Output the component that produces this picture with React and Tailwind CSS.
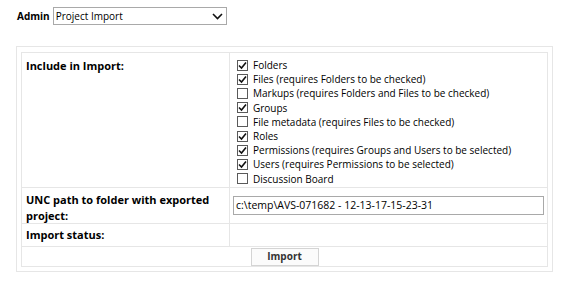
const OPTIONS = [
  { label: 'Folders', checked: true },
  { label: 'Files (requires Folders to be checked)', checked: true },
  { label: 'Markups (requires Folders and Files to be checked)', checked: false },
  { label: 'Groups', checked: true },
  { label: 'File metadata (requires Files to be checked)', checked: false },
  { label: 'Roles', checked: true },
  { label: 'Permissions (requires Groups and Users to be selected)', checked: true },
  { label: 'Users (requires Permissions to be selected)', checked: true },
  { label: 'Discussion Board', checked: false },
];

function Box({ checked }) {
  return (
    <span className="w-[11px] h-[11px] border border-[#5a5a5a] bg-white flex items-center justify-center shrink-0">
      {checked && (
        <svg width="9" height="9" viewBox="0 0 9 9">
          <path d="M1 4.5 L3.5 7 L8 1.5" fill="none" stroke="#111" strokeWidth="1.6" />
        </svg>
      )}
    </span>
  );
}

export default function App() {
  return (
    <div className="w-[568px] h-[286px] bg-white text-black text-[10px] font-['Open_Sans',sans-serif]">
      <div className="flex items-center pl-[17px] pt-[7px] gap-[3px]">
        <span className="font-bold">Admin</span>
        <div className="w-[174px] h-[18px] border border-[#a9a9a9] flex items-center justify-between pl-[2px] pr-[3px]">
          <span>Project Import</span>
          <svg width="11" height="7" viewBox="0 0 11 7">
            <path d="M1 1 L5.5 5.5 L10 1" fill="none" stroke="#111" strokeWidth="1.6" />
          </svg>
        </div>
      </div>

      <div className="ml-[16px] mt-[21px] w-[537px] border border-[#e6e6e6] pt-[5px] pb-[4px] px-[4px]">
        <div className="border border-[#e6e6e6] grid grid-cols-[208px_1fr]">
          <div className="h-[135px] border-r border-b border-[#e6e6e6] pl-[4px] pt-[5px] font-bold text-[11px]">Include in Import:</div>
          <div className="h-[135px] border-b border-[#e6e6e6] pl-[7px] pt-[5px]">
            {OPTIONS.map(o => (
              <div key={o.label} className="h-[14.2px] flex items-center gap-[5px]">
                <Box checked={o.checked} />
                <span className="leading-none">{o.label}</span>
              </div>
            ))}
          </div>

          <div className="h-[36px] border-r border-b border-[#e6e6e6] pl-[4px] pt-[4px] font-bold text-[11px] leading-[16px]">
            UNC path to folder with exported project:
          </div>
          <div className="h-[36px] border-b border-[#e6e6e6] px-[3px] flex items-center">
            <div className="w-full h-[19px] border border-[#a9a9a9] flex items-center pl-[2px] text-[10.5px]">
              c:\temp\AVS-071682 - 12-13-17-15-23-31
            </div>
          </div>

          <div className="h-[23px] border-r border-b border-[#e6e6e6] pl-[4px] flex items-center font-bold text-[11px]">Import status:</div>
          <div className="h-[23px] border-b border-[#e6e6e6]"></div>

          <div className="col-span-2 h-[19px] flex items-center justify-center">
            <button className="w-[68px] h-[18px] border border-[#d4d4d4] bg-[#fbfbfb] font-bold text-[10px] text-[#333]">Import</button>
          </div>
        </div>
      </div>
    </div>
  );
}
